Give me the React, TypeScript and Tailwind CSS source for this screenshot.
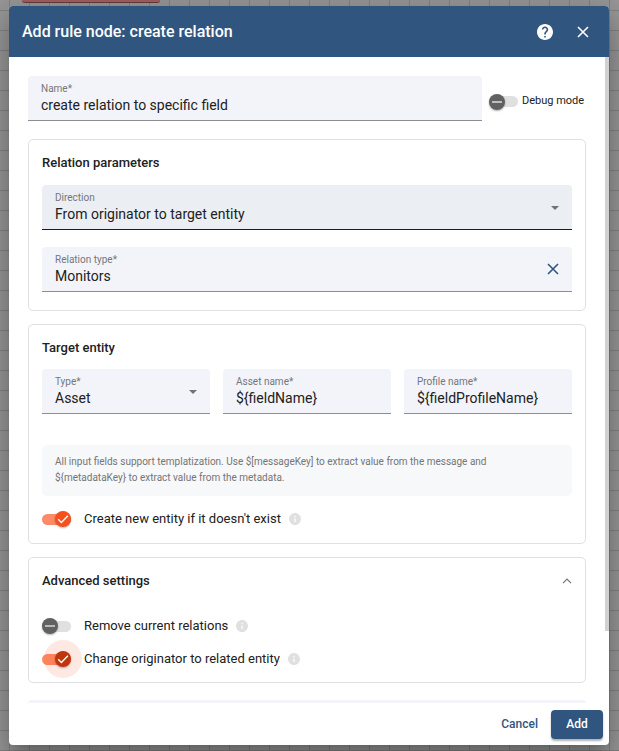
import { useId, useState, type ReactNode } from "react";

function CloseIcon({ className }: { className: string }) {
  return (
    <svg viewBox="0 0 12 12" className={className} aria-hidden="true">
      <path d="M1 1 11 11M11 1 1 11" stroke="currentColor" strokeWidth="1.6" fill="none" />
    </svg>
  );
}

function HelpIcon() {
  return (
    <svg viewBox="2 2 20 20" className="size-4" fill="currentColor" aria-hidden="true">
      <path d="M12 2C6.48 2 2 6.48 2 12s4.48 10 10 10 10-4.48 10-10S17.52 2 12 2zm1 17h-2v-2h2v2zm2.07-7.75-.9.92C13.45 12.9 13 13.5 13 15h-2v-.5c0-1.1.45-2.1 1.17-2.83l1.24-1.26c.37-.36.59-.86.59-1.41 0-1.1-.9-2-2-2s-2 .9-2 2H8c0-2.21 1.79-4 4-4s4 1.79 4 4c0 .88-.36 1.68-.93 2.25z" />
    </svg>
  );
}

function InfoIcon() {
  return (
    <svg viewBox="2 2 20 20" className="size-3 shrink-0 text-[#e0e0e0]" fill="currentColor" aria-hidden="true">
      <path d="M12 2C6.48 2 2 6.48 2 12s4.48 10 10 10 10-4.48 10-10S17.52 2 12 2zm1 15h-2v-6h2v6zm0-8h-2V7h2v2z" />
    </svg>
  );
}

const fieldBox = "flex h-[45px] min-w-0 items-center rounded-t border-b pl-[13px] pr-3";
const fieldColumn = "flex min-w-0 flex-1 flex-col pb-0.5";
const labelText = "text-[10px] leading-4 text-[#757679]";
const valueText = "h-4 w-full min-w-0 appearance-none bg-transparent text-sm leading-4 text-[#212121] outline-none";

type FieldProps = { label: string; value: string; className?: string; action?: ReactNode };

function TextField({ label, value, className = "", action }: FieldProps) {
  const id = useId();
  return (
    <div className={`${fieldBox} border-[#8d8e92] bg-[#f3f4f9] ${className}`}>
      <div className={fieldColumn}>
        <label htmlFor={id} className={labelText}>
          {label}
        </label>
        <input id={id} defaultValue={value} className={valueText} />
      </div>
      {action}
    </div>
  );
}

function SelectField({ label, value, active = false }: FieldProps & { active?: boolean }) {
  const id = useId();
  return (
    <div className={`${fieldBox} ${active ? "border-[#1c1c1e] bg-[#ebeff4]" : "border-[#8d8e92] bg-[#f3f4f9]"}`}>
      <div className={fieldColumn}>
        <label htmlFor={id} className={labelText}>
          {label}
        </label>
        <select id={id} defaultValue={value} className={valueText}>
          <option>{value}</option>
        </select>
      </div>
      <svg viewBox="0 0 8 4" className="mr-px mt-0.5 h-1 w-2 shrink-0" aria-hidden="true">
        <path d="M0 0h8L4 4z" fill="#6f7276" />
      </svg>
    </div>
  );
}

type ToggleProps = { label: string; initial?: boolean; focused?: boolean; info?: boolean; compact?: boolean };

function Toggle({ label, initial = false, focused = false, info = false, compact = false }: ToggleProps) {
  const id = useId();
  const [on, setOn] = useState(initial);
  const knob = on ? (focused ? "bg-[#bf360c]" : "bg-[#f4511e]") : "bg-[#616161]";
  return (
    <div className="flex h-[18px] items-center">
      <span className="relative flex h-4 w-[29px] shrink-0 items-center">
        <input
          id={id}
          type="checkbox"
          role="switch"
          checked={on}
          onChange={(e) => setOn(e.target.checked)}
          className={`h-[11px] w-full appearance-none rounded-full outline-none ${on ? "bg-[#ff8a65]" : "bg-[#e0e0e0]"}`}
        />
        {focused && (
          <span className="pointer-events-none absolute -right-[11px] -top-[11px] size-[38px] rounded-full bg-[#f4511e]/13" />
        )}
        <span
          className={`pointer-events-none absolute top-0 flex size-4 items-center justify-center rounded-full shadow-[0_1px_2px_rgba(0,0,0,0.3)] ${knob} ${on ? "right-0" : "left-0"}`}
        >
          <svg viewBox="0 0 16 16" className="size-4" fill="none" stroke="#fff" strokeWidth="1.4" aria-hidden="true">
            {on ? <path d="M3.2 8.3 6.4 11.4 12.9 4.8" /> : <path d="M3 8H13" stroke="#dedede" />}
          </svg>
        </span>
      </span>
      <label htmlFor={id} className={compact ? "ml-1 whitespace-nowrap text-[11px] text-[#212121]" : "ml-[13px] mr-2 text-[13px] text-[#212121]"}>
        {label}
      </label>
      {info && <InfoIcon />}
    </div>
  );
}

function Panel({ children, className }: { children: ReactNode; className: string }) {
  return <section className={`flex flex-col rounded-[5px] border border-[#e0e0e0] px-[13px] pt-[13px] ${className}`}>{children}</section>;
}

function PanelTitle({ children }: { children: string }) {
  return <h2 className="text-[13px] font-medium leading-5 text-[#212121]">{children}</h2>;
}

export default function App() {
  return (
    <div className="h-screen overflow-hidden bg-[#969696] bg-[linear-gradient(to_right,#818181_1px,transparent_1px),linear-gradient(to_bottom,#818181_1px,transparent_1px)] bg-size-[20px_20px] bg-position-[9px_10px] pb-1.5 pl-[9px] pr-2.5 font-['Roboto','Liberation_Sans',sans-serif]">
      <div className="mx-[13px] h-[3px] w-[138px] rounded-b border-b border-[#633c3c] bg-[#a35f5f]" />
      <div role="dialog" aria-labelledby="dialog-title" className="mt-[3px] flex h-[calc(100vh-12px)] flex-col overflow-hidden rounded bg-white shadow-[0_9px_12px_-5px_rgba(0,0,0,0.2),0_19px_30px_2px_rgba(0,0,0,0.14),0_7px_37px_6px_rgba(0,0,0,0.12)]">
        <header className="flex h-[51px] shrink-0 items-center bg-[#305680] pl-[13px] pr-5 text-white">
          <h1 id="dialog-title" className="flex-1 text-base font-medium">
            Add rule node: create relation
          </h1>
          <button type="button" aria-label="Help" className="mr-6">
            <HelpIcon />
          </button>
          <button type="button" aria-label="Close">
            <CloseIcon className="size-3" />
          </button>
        </header>

        <main className="relative min-h-0 flex-1 overflow-hidden pl-[19px] pr-[23px] pt-[19px]">
          <div className="absolute right-0 top-0 h-8/9 w-1 bg-[#d1d1d1]" />
          <div className="mb-[18px] flex items-center gap-[7px]">
            <TextField label="Name*" value="create relation to specific field" className="flex-1" />
            <div className="w-[97px] pt-1.5">
              <Toggle label="Debug mode" compact />
            </div>
          </div>

          <Panel className="mb-[13px] pb-[18px]">
            <PanelTitle>Relation parameters</PanelTitle>
            <div className="mt-3 flex flex-col gap-[17px]">
              <SelectField label="Direction" value="From originator to target entity" active />
              <TextField
                label="Relation type*"
                value="Monitors"
                action={
                  <button type="button" aria-label="Clear relation type" className="text-[#305680]">
                    <CloseIcon className="mr-px size-3" />
                  </button>
                }
              />
            </div>
          </Panel>

          <Panel className="mb-[13px] pb-[15px]">
            <PanelTitle>Target entity</PanelTitle>
            <div className="mt-[11px] grid grid-cols-3 gap-[13px]">
              <SelectField label="Type*" value="Asset" />
              <TextField label="Asset name*" value="${fieldName}" />
              <TextField label="Profile name*" value="${fieldProfileName}" />
            </div>
            <p className="mb-[14px] mt-[31px] rounded-[5px] bg-[#f7f8fa] px-[13px] pb-[10px] pt-[9px] text-[10px] leading-4 text-[#757575]">
              {"All input fields support templatization. Use $[messageKey] to extract value from the message and ${metadataKey} to extract value from the metadata."}
            </p>
            <Toggle label="Create new entity if it doesn't exist" initial info />
          </Panel>

          <Panel className="mb-[17px] pb-[14px]">
            <div className="mb-[26px] flex items-center justify-between">
              <PanelTitle>Advanced settings</PanelTitle>
              <button type="button" aria-label="Collapse advanced settings">
                <svg viewBox="0 0 10 6" className="h-1.5 w-2.5" fill="none" stroke="#757575" strokeWidth="1.2" aria-hidden="true">
                  <path d="M1 5.2 5 1.2 9 5.2" />
                </svg>
              </button>
            </div>
            <div className="flex flex-col gap-[15px]">
              <Toggle label="Remove current relations" info />
              <Toggle label="Change originator to related entity" initial focused info />
            </div>
          </Panel>

          <div className="h-[45px] rounded-t bg-[#f3f4f9]" />
        </main>

        <footer className="flex h-[42px] shrink-0 items-start justify-end gap-[13px] pr-1.5 pt-[7px] text-xs font-medium">
          <button type="button" className="h-[29px] pb-0.5 text-[#305680]">
            Cancel
          </button>
          <button type="button" className="h-[29px] w-[52px] rounded bg-[#305680] pb-0.5 text-white shadow-[0_2px_2px_rgba(0,0,0,0.3)]">
            Add
          </button>
        </footer>
      </div>
    </div>
  );
}
